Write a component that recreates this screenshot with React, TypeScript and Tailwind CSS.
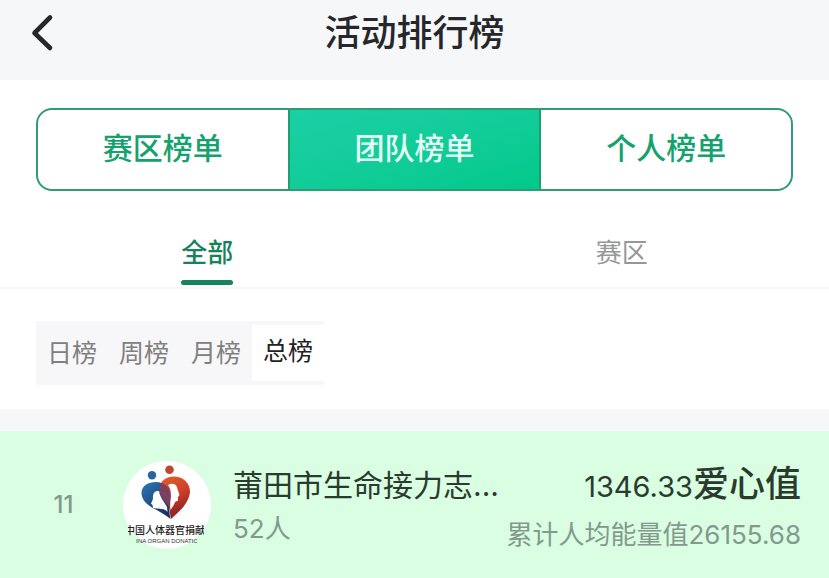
import { useState } from 'react';
import clsx from 'clsx';

const boards = ['赛区榜单', '团队榜单', '个人榜单'];
const scopes = ['全部', '赛区'];
const periods = ['日榜', '周榜', '月榜', '总榜'];

const teams = [
  {
    rank: 11,
    name: '莆田市生命接力志...',
    members: '52人',
    score: '1346.33',
    average: '累计人均能量值26155.68',
  },
];

const TeamLogo = () => (
  <svg viewBox="0 0 88 88" className="size-22 shrink-0" role="img" aria-label="中国人体器官捐献">
    <defs>
      <clipPath id="logo-name">
        <rect x="5" y="60" width="76" height="16" />
      </clipPath>
      <clipPath id="logo-latin">
        <rect x="13" y="75" width="61" height="8" />
      </clipPath>
      <linearGradient id="logo-red" x1="0" y1="0" x2="0.3" y2="1">
        <stop offset="0" stopColor="#e0602f" />
        <stop offset="0.5" stopColor="#cf4028" />
        <stop offset="1" stopColor="#8e1f26" />
      </linearGradient>
      <linearGradient id="logo-blue" x1="0" y1="0" x2="0.6" y2="1">
        <stop offset="0" stopColor="#2c78b0" />
        <stop offset="0.5" stopColor="#20568f" />
        <stop offset="1" stopColor="#1b3064" />
      </linearGradient>
    </defs>
    <circle cx="44" cy="44" r="44" fill="#fff" />
    <circle cx="46.500" cy="8.800" r="4.300" fill="#c4452f" />
    <circle cx="29" cy="14.300" r="4.200" fill="#27679f" />
    {/* two halves of the heart */}
    <path
      d="M48 58C57 50 66 42 67 31C67 21 59 15.500 51 15.500C42 15.500 36 21 36.500 29C37 37 44 41 46 46C47 50 47 54 48 58Z"
      fill="url(#logo-red)"
    />
    <path
      d="M47.500 58C38 49 20 46 18.500 33C18 25 25 21 33 21C42 21 48 28 47.500 36C47 42 45 46 47.500 58Z"
      fill="url(#logo-blue)"
    />
    {/* face profiles */}
    <path
      d="M44.500 51C41 46.500 37 49 34 47.500L30 47L29.500 44L28 42.500L30 38C29.500 33 31 29.500 36 30C37 37 41 40 44 46Z"
      fill="#fff"
    />
    <path
      d="M47.800 32C47.500 28 46.500 26 45 24C49 21.500 54 23 54.500 28L56.500 34L55 36L55 39.500L52 41C51.500 44 49 46 47.500 49C46.500 44 47.800 38 47.800 32Z"
      fill="#fff"
    />
    <path
      d="M37 22C43 22.500 48 29 47.700 36C47.300 40 46 43 46.500 47C43 41 37 37 36.500 29C36.300 26 36.300 24 37 22Z"
      fill="#7d3f60"
    />
    <g clipPath="url(#logo-name)">
      <text x="42" y="73" textAnchor="middle" fontSize="10" fontWeight="500" fill="#222">
        中国人体器官捐献
      </text>
    </g>
    <g clipPath="url(#logo-latin)">
      <text x="42" y="82" textAnchor="middle" fontSize="6" className="font-['Liberation_Sans',sans-serif]" fill="#333">
        CHINA ORGAN DONATION
      </text>
    </g>
  </svg>
);

export default function App() {
  const [board, setBoard] = useState(1);
  const [scope, setScope] = useState(0);
  const [period, setPeriod] = useState(3);

  return (
    <div className="flex min-h-screen flex-col bg-white font-['Inter','Noto_Sans_CJK_SC',sans-serif]">
      {/* Header */}
      <header className="grid h-20 grid-cols-[72px_1fr_72px] bg-[#f6f7f9] pb-3.5">
        <button type="button" aria-label="返回" className="flex items-center pl-7">
          <svg
            viewBox="0 0 28 40"
            className="h-10 w-7"
            fill="none"
            stroke="#26272b"
            strokeWidth="4.600"
            strokeLinecap="round"
            strokeLinejoin="round"
          >
            <path d="M22 4.500L6.500 20L22 35" />
          </svg>
        </button>
        <h1 className="self-center text-center text-[36px] leading-10 font-medium text-[#26272b]">
          活动排行榜
        </h1>
      </header>

      {/* Board switch */}
      <nav className="mx-9 mt-7 flex h-[83px] overflow-hidden rounded-2xl border-2 border-[#2f9c74]">
        {boards.map((label, index) => (
          <button
            key={label}
            type="button"
            onClick={() => setBoard(index)}
            className={clsx(
              'flex-1 pb-1 text-[30px] leading-10 font-medium',
              board === index
                ? 'border-x-2 border-[#1f9e70] bg-linear-to-br from-[#1ccfa6] to-[#02c98b] text-[#e6fff6]'
                : 'text-[#15a26d]'
            )}
          >
            {label}
          </button>
        ))}
      </nav>

      {/* Scope tabs */}
      <div className="mt-9 flex border-b-2 border-[#f7f7f7] pb-0.5">
        {scopes.map((label, index) => (
          <div key={label} className="flex flex-1 justify-center">
            <button
              type="button"
              onClick={() => setScope(index)}
              className={clsx(
                'flex flex-col text-[26px] leading-[52px]',
                scope === index ? 'font-medium text-[#16835a]' : 'text-[#979797]'
              )}
            >
              {label}
              {scope === index && <span className="mt-px h-[5px] w-full rounded-sm bg-[#16835a]" />}
            </button>
          </div>
        ))}
      </div>

      {/* Period switch */}
      <div className="mx-9 mt-8 mb-6 flex h-16 self-start bg-[#f7f7f9] py-1">
        {periods.map((label, index) => (
          <button
            key={label}
            type="button"
            onClick={() => setPeriod(index)}
            className={clsx(
              'px-[11px] text-[25px] leading-10',
              period === index ? 'bg-white pb-1 text-[#222]' : 'text-[#808080]'
            )}
          >
            {label}
          </button>
        ))}
      </div>

      {/* Ranking */}
      <ul className="flex-1 border-t-22 border-[#f6f7f8] bg-[#d9fee1]">
        {teams.map((team) => (
          <li key={team.rank} className="flex h-[147px] items-center pr-7">
            <span className="w-[123px] shrink-0 pl-1 text-center text-[24px] font-medium text-[#83998d]">
              {team.rank}
            </span>
            <TeamLogo />
            <div className="ml-[22px] flex-1 pt-1">
              <p className="text-[30px] leading-11 whitespace-nowrap text-[#2b3a2e]">{team.name}</p>
              <p className="text-[26px] leading-11 text-[#83998d]">{team.members}</p>
            </div>
            <div className="pt-1.5 text-right whitespace-nowrap">
              <p className="text-[36px] leading-13 font-medium text-[#2b3a2e]">
                <span className="text-[29px] font-normal">{team.score}</span>爱心值
              </p>
              <p className="text-[26px] leading-11 text-[#83998d]">{team.average}</p>
            </div>
          </li>
        ))}
      </ul>
    </div>
  );
}
